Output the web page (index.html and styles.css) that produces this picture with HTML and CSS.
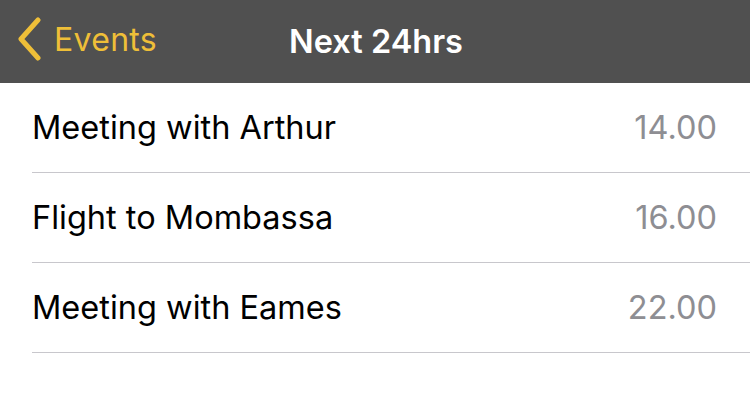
FILE: index.html
```html
<!DOCTYPE html>
<html lang="en">
<head>
    <meta charset="UTF-8">
    <meta name="viewport" content="width=device-width, initial-scale=1.0">
    <title>Next 24hrs</title>
    <link rel="stylesheet" href="styles.css">
</head>
<body>
    <header class="navbar">
        <a class="back" href="#">
            <svg class="chevron" width="28" height="44" viewBox="0 0 28 44">
                <path d="M22 3 L5 22 L22 41" fill="none" stroke="currentColor" stroke-width="5" stroke-linecap="round" stroke-linejoin="round"/>
            </svg>
            <span>Events</span>
        </a>
        <h1 class="title">Next 24hrs</h1>
    </header>
    <ul class="events">
        <li class="event"><span class="name">Meeting with Arthur</span><span class="time">14.00</span></li>
        <li class="event"><span class="name">Flight to Mombassa</span><span class="time">16.00</span></li>
        <li class="event"><span class="name">Meeting with Eames</span><span class="time">22.00</span></li>
    </ul>
</body>
</html>
```

FILE: styles.css
```css
body {
    margin: 0;
    background-color: #ffffff;
    font-family: Inter, "Liberation Sans", sans-serif;
}

.navbar {
    position: relative;
    height: 83px;
    background-color: #505050;
    display: flex;
    align-items: center;
    justify-content: center;
}

.back {
    position: absolute;
    left: 16px;
    top: 17px;
    display: flex;
    align-items: center;
    gap: 10px;
    color: #efbf38;
    text-decoration: none;
    font-size: 32px;
    letter-spacing: 0.3px;
}

.chevron { display: block; }

.title {
    margin: 0 0 0 2px;
    color: #ffffff;
    font-size: 32.5px;
    font-weight: 600;
}

.events {
    list-style: none;
    margin: 0;
    padding: 0 0 0 32px;
}

.event {
    height: 89px;
    display: flex;
    align-items: center;
    justify-content: space-between;
    padding-right: 33px;
    border-bottom: 1px solid #c8c7cc;
    font-size: 32.5px;
    color: #000000;
}

.time { color: #8e8e93; }
```
